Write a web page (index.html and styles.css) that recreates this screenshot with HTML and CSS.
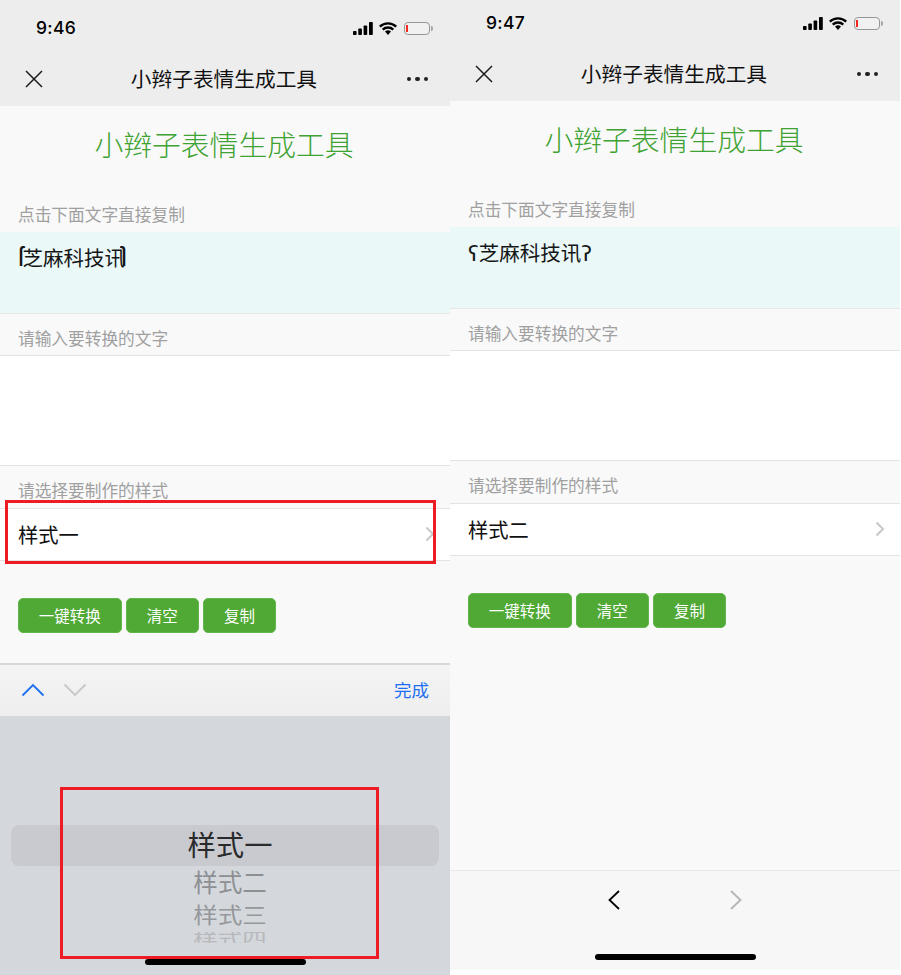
FILE: index.html
```html
<!DOCTYPE html>
<html lang="zh-CN">
<head>
<meta charset="utf-8">
<title>小辫子表情生成工具</title>
<link rel="stylesheet" href="styles.css">
</head>
<body>
<svg class="defs" width="0" height="0" aria-hidden="true">
  <symbol id="signal" viewBox="0 0 20 13"><rect x="0" y="9" width="3.6" height="4" rx=".8"/><rect x="5.3" y="6.5" width="3.6" height="6.5" rx=".8"/><rect x="10.6" y="3.5" width="3.6" height="9.5" rx=".8"/><rect x="16" y="0" width="3.8" height="13" rx=".8"/></symbol>
  <symbol id="wifi" viewBox="0 0 18 13"><path d="M9 13l-3-3.400a4.300 4.300 0 0 1 6 0z"/><path d="M.8 4.600a12 12 0 0 1 16.400 0M3.700 7.600a7.800 7.800 0 0 1 10.600 0" fill="none" stroke="currentColor" stroke-width="2.300"/></symbol>
  <symbol id="close" viewBox="0 0 18 18"><path d="M1 1l16 16M17 1L1 17" fill="none" stroke="currentColor" stroke-width="1.500"/></symbol>
  <symbol id="chev" viewBox="0 0 10 16"><path d="M1.500 1.500L8 8l-6.500 6.500" fill="none" stroke="currentColor" stroke-width="2"/></symbol>
</svg>

<main class="phones">
  <section class="phone">
    <div class="screen">
      <header class="chrome">
        <div class="status">
          <span class="time">9:46</span>
          <div class="status-icons">
            <svg class="ic-signal"><use href="#signal"/></svg>
            <svg class="ic-wifi"><use href="#wifi"/></svg>
            <span class="battery"><span class="battery-level"></span></span>
          </div>
        </div>
        <nav class="nav">
          <svg class="ic-close"><use href="#close"/></svg>
          <span class="nav-title">小辫子表情生成工具</span>
          <span class="dots"><i></i><i></i><i></i></span>
        </nav>
      </header>
      <h1 class="title">小辫子表情生成工具</h1>
      <p class="label label-first">点击下面文字直接复制</p>
      <div class="output"><span class="hook hook-start">ſ</span>芝麻科技讯<span class="hook hook-end">ſ</span></div>
      <p class="label">请输入要转换的文字</p>
      <div class="input"></div>
      <p class="label label-last">请选择要制作的样式</p>
      <div class="select"><span>样式一</span><svg class="ic-chev"><use href="#chev"/></svg></div>
      <div class="buttons">
        <button class="btn btn-wide">一键转换</button>
        <button class="btn">清空</button>
        <button class="btn">复制</button>
      </div>
      <div class="keyboard">
        <div class="kb-bar">
          <svg class="kb-arrow kb-up" viewBox="0 0 24 14"><path d="M1.500 12.500L12 2l10.500 10.500" fill="none" stroke="currentColor" stroke-width="1.800"/></svg>
          <svg class="kb-arrow kb-down" viewBox="0 0 24 14"><path d="M1.500 1.500L12 12 22.500 1.500" fill="none" stroke="currentColor" stroke-width="1.800"/></svg>
          <span class="kb-done">完成</span>
        </div>
        <div class="picker">
          <div class="pick pick-1">样式一</div>
          <div class="pick pick-2">样式二</div>
          <div class="pick pick-3">样式三</div>
          <div class="pick pick-4"><span>样式四</span></div>
        </div>
      </div>
      <div class="home"></div>
      <div class="mark mark-select"></div>
      <div class="mark mark-picker"></div>
    </div>
  </section>

  <section class="phone phone-scrolled">
    <div class="screen">
      <header class="chrome">
        <div class="status">
          <span class="time">9:47</span>
          <div class="status-icons">
            <svg class="ic-signal"><use href="#signal"/></svg>
            <svg class="ic-wifi"><use href="#wifi"/></svg>
            <span class="battery"><span class="battery-level"></span></span>
          </div>
        </div>
        <nav class="nav">
          <svg class="ic-close"><use href="#close"/></svg>
          <span class="nav-title">小辫子表情生成工具</span>
          <span class="dots"><i></i><i></i><i></i></span>
        </nav>
      </header>
      <h1 class="title">小辫子表情生成工具</h1>
      <p class="label label-first">点击下面文字直接复制</p>
      <div class="output"><span class="ear">ʕ</span>芝麻科技讯<span class="ear">ʔ</span></div>
      <p class="label">请输入要转换的文字</p>
      <div class="input"></div>
      <p class="label label-last">请选择要制作的样式</p>
      <div class="select"><span>样式二</span><svg class="ic-chev"><use href="#chev"/></svg></div>
      <div class="buttons">
        <button class="btn btn-wide">一键转换</button>
        <button class="btn">清空</button>
        <button class="btn">复制</button>
      </div>
      <div class="webbar">
        <svg class="web-arrow web-back" viewBox="0 0 12 20"><path d="M11 1L1.500 10 11 19" fill="none" stroke="currentColor" stroke-width="1.800"/></svg>
        <svg class="web-arrow web-forward" viewBox="0 0 12 20"><path d="M1 1l9.500 9L1 19" fill="none" stroke="currentColor" stroke-width="1.800"/></svg>
      </div>
      <div class="home"></div>
    </div>
  </section>
</main>
</body>
</html>
```

FILE: styles.css
```css
* { box-sizing: border-box; }
html, body { margin: 0; padding: 0; background: #fff; }
body {
  width: 901px;
  height: 975px;
  overflow: hidden;
  font-family: "Noto Sans CJK SC", "Noto Sans", sans-serif;
}
.defs { position: absolute; }

.phones { display: flex; align-items: flex-start; }
.phone { width: 450px; height: 975px; overflow: hidden; }
.phone-scrolled { height: 970px; }
.phone-scrolled .screen { margin-top: -5px; }

.screen {
  position: relative;
  display: flex;
  flex-direction: column;
  height: 975px;
  background: #f9f9f9;
}

/* top chrome */
.chrome { background: #ededed; height: 106px; flex: none; }
.status {
  display: flex;
  align-items: center;
  justify-content: space-between;
  height: 56px;
  padding: 0 20px 0 36px;
  color: #000;
}
.time { font: 500 17.500px/1 Inter, "Liberation Sans", sans-serif; letter-spacing: .3px; }
.status-icons { display: flex; align-items: center; }
.ic-signal { width: 20px; height: 13px; fill: #000; }
.ic-wifi { width: 18px; height: 13px; margin-left: 6px; fill: #000; color: #000; }
.battery {
  position: relative;
  display: block;
  width: 26px;
  height: 13px;
  margin-left: 7px;
  border: 1px solid #979797;
  border-radius: 4px;
  background: #f1f1f1;
}
.battery::after {
  content: "";
  position: absolute;
  right: -4px;
  top: 3px;
  width: 2px;
  height: 5px;
  border-radius: 0 2px 2px 0;
  background: #a5a5a5;
}
.battery-level {
  position: absolute;
  left: 1px;
  top: 2px;
  width: 2px;
  height: 7px;
  background: #f5281e;
}
.nav {
  display: flex;
  align-items: center;
  justify-content: space-between;
  height: 46px;
  padding: 0 22px 0 25px;
  color: #111;
}
.ic-close { width: 18px; height: 18px; color: #1a1a1a; }
.nav-title { margin: -2px 0 0 -2px; font-size: 20.700px; line-height: 44px; color: #111; }
.dots { display: flex; gap: 4px; }
.dots i { display: block; width: 4.400px; height: 4.400px; border-radius: 50%; background: #222; }

/* page */
.title {
  margin: 0;
  height: 78px;
  padding-right: 2px;
  text-align: center;
  font-size: 28.800px;
  line-height: 76px;
  font-weight: 300;
  color: #3fa333;
}
.label {
  margin: 0;
  padding: 13px 18px 6px;
  font-size: 16.700px;
  line-height: 22px;
  color: #a0a0a0;
  white-space: nowrap;
}
.label-first { padding: 19px 18px 7px; }
.label-last { padding-bottom: 7px; }
.output {
  height: 82px;
  padding: 13px 18px 0;
  background: #eaf8f8;
  border-bottom: 1px solid #e6e8e8;
  font-size: 20.500px;
  line-height: 24px;
  color: #151515;
}
.hook {
  display: inline-block;
  font-family: "Liberation Sans", sans-serif;
  font-size: 27px;
  line-height: 24px;
  vertical-align: top;
  font-weight: 400;
}
.hook-start { margin-right: -1.500px; }
.hook-end { margin-left: -4px; transform: scaleX(-1); }
.ear { font-family: "DejaVu Sans", sans-serif; font-size: 21px; }
.input {
  height: 111px;
  background: #fff;
  border-top: 1px solid #e3e3e3;
  border-bottom: 1px solid #e3e3e3;
}
.select {
  display: flex;
  align-items: center;
  justify-content: space-between;
  height: 53px;
  padding: 0 15px 2px 18px;
  background: #fff;
  border-top: 1px solid #e3e3e3;
  border-bottom: 1px solid #e3e3e3;
  font-size: 20.300px;
  color: #111;
}
.ic-chev { width: 10px; height: 16px; color: #c8c8cc; }
.buttons { display: flex; gap: 4.500px; margin-top: 37px; padding-left: 18px; }
.btn {
  width: 72.750px;
  height: 35px;
  padding: 0 0 2px;
  border: 1px solid #62b64d;
  border-radius: 5px;
  background: #50a935;
  color: #fff;
  font-family: inherit;
  font-size: 15.500px;
}
.btn-wide { width: 103.500px; }

/* keyboard */
.keyboard { margin-top: auto; }
.kb-bar {
  display: flex;
  align-items: center;
  height: 53px;
  padding: 0 21px 2px;
  border-top: 2px solid #d8d8d8;
  background: linear-gradient(#f5f4f4, #eeeeee);
}
.kb-arrow { width: 24px; height: 14px; }
.kb-up { color: #1e6ff1; }
.kb-down { margin-left: 18px; color: #c8c8c8; }
.kb-done { margin-left: auto; font-size: 17.500px; color: #1e6ff1; }
.picker {
  height: 259px;
  padding-top: 109px;
  background: #d4d7dc;
  text-align: center;
  overflow: hidden;
}
.pick { position: relative; padding-left: 10px; white-space: nowrap; }
.pick-1 { z-index: 0; font-size: 28.300px; line-height: 38px; height: 41px; color: #2a2a2c; }
.pick-1::before {
  content: "";
  position: absolute;
  left: 11px;
  right: 11px;
  top: 0;
  bottom: 0;
  border-radius: 8px;
  background: #c9cacf;
  z-index: -1;
}
.pick-2 { margin-top: -1px; font-size: 24.500px; line-height: 34px; height: 34px; color: #8e8f93; }
.pick-3 { font-size: 24.500px; line-height: 30px; height: 30px; color: #96979b; transform: scaleY(.88); }
.pick-4 { margin-top: 3px; font-size: 24.500px; line-height: 18px; height: 11px; color: #b8b9bd; overflow: hidden; }
.pick-4 span { display: inline-block; transform: scaleY(.7); transform-origin: top; vertical-align: top; }

/* bottom web bar */
.webbar {
  display: flex;
  align-items: flex-start;
  justify-content: center;
  gap: 110px;
  height: 100px;
  margin-top: auto;
  padding-top: 19px;
  background: #f7f7f7;
  border-top: 1px solid #e8e8e8;
}
.web-arrow { width: 12px; height: 20px; }
.web-back { color: #000; }
.web-forward { color: #b4b4b4; }

.home {
  position: absolute;
  left: 145px;
  top: 959px;
  width: 161px;
  height: 6px;
  border-radius: 3px;
  background: #000;
}

/* red annotation frames */
.mark { position: absolute; border: 3px solid #ed1c24; }
.mark-select { left: 5px; top: 500px; width: 431px; height: 64px; }
.mark-picker { left: 60px; top: 787px; width: 319px; height: 172px; }
```
